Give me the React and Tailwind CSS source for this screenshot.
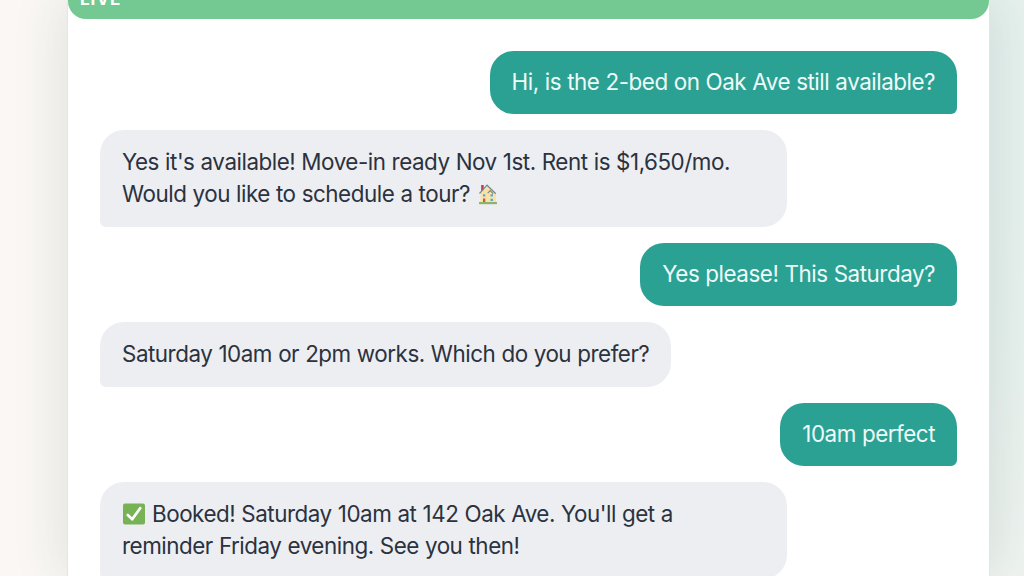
const messages = [
    { from: 'guest', lines: ['Hi, is the 2-bed on Oak Ave still available?'] },
    {
        from: 'agent',
        lines: ["Yes it's available! Move-in ready Nov 1st. Rent is $1,650/mo.", 'Would you like to schedule a tour?'],
        after: 'house',
    },
    { from: 'guest', lines: ['Yes please! This Saturday?'] },
    { from: 'agent', lines: ['Saturday 10am or 2pm works. Which do you prefer?'] },
    { from: 'guest', lines: ['10am perfect'] },
    {
        from: 'agent',
        lines: ["Booked! Saturday 10am at 142 Oak Ave. You'll get a", 'reminder Friday evening. See you then!'],
        before: 'check',
    },
];

function HouseIcon() {
    return (
        <svg viewBox="0 0 20 22" className="inline-block w-5 h-[22px] ml-2 -mt-1 align-middle" aria-hidden="true">
            <path d="M3.2 2h2.5v6H3.2z" fill="#b83d55" />
            <path d="M2.5 10l7-7 8.5 7v10H2.5z" fill="#fae2a4" />
            <path d="M1.5 10.5L9 2.2l8.8 8.6M9.7 10.2L12.2 7.7l3 3" fill="none" stroke="#7d878b" strokeWidth="1.2" />
            <path d="M5 11.2h2.3v2.4H5zM12.5 11.2h2.5v2.4h-2.5zM12.5 15.8h2.5v2.2h-2.5z" fill="#54aad9" />
            <path d="M5 15.5h2.3v4H5z" fill="#c45b43" />
            <path d="M1 19h18v2.2H1z" fill="#8fb36a" />
        </svg>
    );
}

function CheckIcon() {
    return (
        <svg viewBox="0 0 22 22" className="inline-block w-[22px] h-[22px] ml-px mr-[7px] -mt-1 align-middle" aria-hidden="true">
            <rect width="22" height="21" y="0.5" rx="2" fill="#77b255" />
            <path d="M4.8 12l4.4 4.2 8-11" fill="none" stroke="#fff" strokeWidth="2.7" strokeLinecap="round" strokeLinejoin="round" />
        </svg>
    );
}

function Message({ from, lines, before, after }) {
    const guest = from === 'guest';

    return (
        <div
            className={
                guest
                    ? 'self-end shrink-0 rounded-3xl rounded-br-md bg-[#2ba193] px-[22px] pt-[15px] pb-4 text-[#eefaf7]'
                    : `self-start shrink-0 rounded-3xl rounded-bl-md bg-[#edeef2] px-[22px] pt-4 pb-[17px] text-[#2b3240] ${lines.length > 1 ? 'w-[687px]' : ''}`
            }
        >
            {lines.map((line, i) => (
                <p key={line} className="h-8 whitespace-nowrap">
                    {i === 0 && before === 'check' && <CheckIcon />}
                    {line}
                    {i === lines.length - 1 && after === 'house' && <HouseIcon />}
                </p>
            ))}
        </div>
    );
}

export default function App() {
    return (
        <div className="flex h-screen justify-center overflow-hidden bg-[#faf8f5] bg-[radial-gradient(circle_at_100%_15%,#e6f1ed_0,#e8f1ed_25%,#faf7f4_70%)] pl-[33px] font-['Inter',sans-serif]">
            <div className="flex w-[923px] shrink-0 flex-col border-x border-[#e2e5ea] bg-white shadow-[0_0_50px_rgba(40,80,75,0.15)]">
                <div className="flex h-[19px] shrink-0 items-end rounded-b-[18px] bg-[#73c991] pl-3">
                    <span className="mb-[12px] text-[17px] leading-4 font-bold tracking-[1px] text-white">LIVE</span>
                </div>
                <div className="flex flex-col gap-4 px-8 pt-8 text-[22.4px] leading-8 tracking-[-0.47px] [word-spacing:0.3px]">
                    {messages.map((message) => (
                        <Message key={message.lines[0]} {...message} />
                    ))}
                </div>
            </div>
        </div>
    );
}
